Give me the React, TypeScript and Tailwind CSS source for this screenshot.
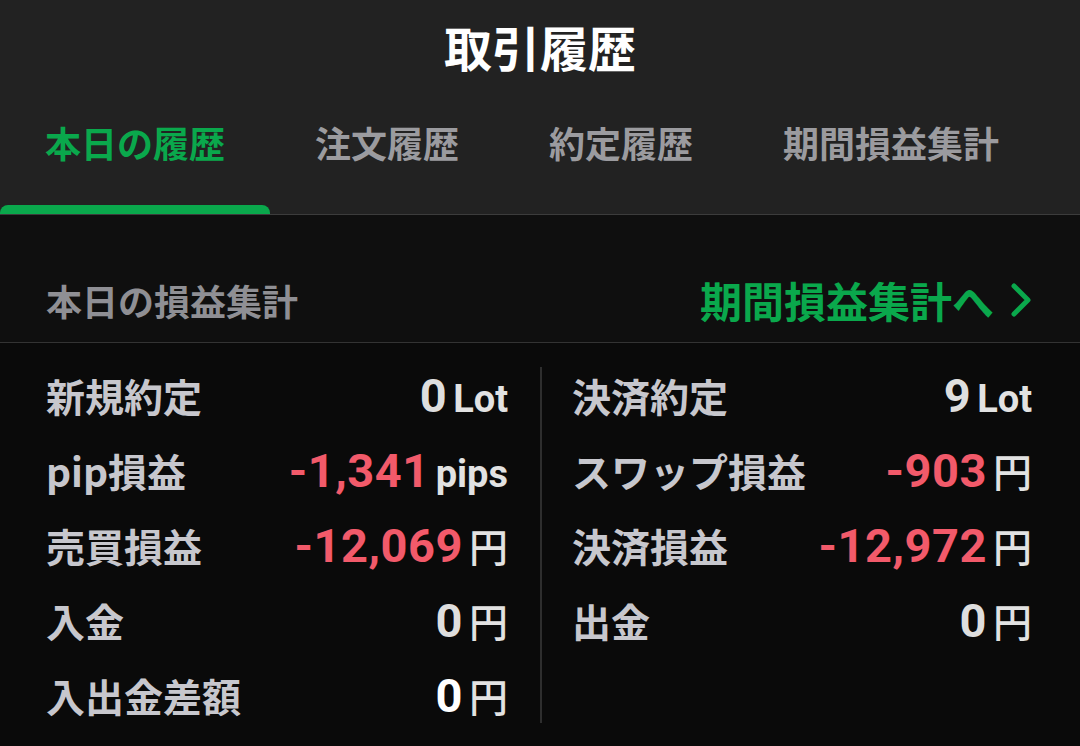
import React from 'react';

type Row = {
  label: string;
  value: string;
  unit: string;
  negative?: boolean;
  strong?: boolean;
};

const leftRows: Row[] = [
  { label: '新規約定', value: '0', unit: 'Lot' },
  { label: 'pip損益', value: '-1,341', unit: 'pips', negative: true },
  { label: '売買損益', value: '-12,069', unit: '円', negative: true },
  { label: '入金', value: '0', unit: '円' },
  { label: '入出金差額', value: '0', unit: '円', strong: true },
];

const rightRows: Row[] = [
  { label: '決済約定', value: '9', unit: 'Lot' },
  { label: 'スワップ損益', value: '-903', unit: '円', negative: true },
  { label: '決済損益', value: '-12,972', unit: '円', negative: true },
  { label: '出金', value: '0', unit: '円' },
];

const tabs = ['本日の履歴', '注文履歴', '約定履歴', '期間損益集計'];

const SummaryRow: React.FC<{ row: Row }> = ({ row }) => (
  <div className="flex h-[75px] items-center justify-between">
    <span className="text-[39px] font-bold leading-[1.2] text-[#c7c7cd]">{row.label}</span>
    <span className="flex items-baseline gap-[6px]">
      <span
        className={`font-['Roboto'] text-[47px] font-bold leading-none tracking-[0.5px] ${
          row.negative ? 'text-[#f25a6a]' : row.strong ? 'text-white' : 'text-[#dedede]'
        }`}
      >
        {row.value}
      </span>
      {row.unit === '円' ? (
        <span className="text-[39px] font-medium leading-none text-[#e2e2e2]">円</span>
      ) : (
        <span className="font-['Roboto'] text-[38px] font-bold leading-none text-[#e2e2e2]">{row.unit}</span>
      )}
    </span>
  </div>
);

export default function App() {
  return (
    <div className="flex h-[746px] w-[1080px] flex-col overflow-hidden bg-[#0a0a0a] font-['Noto_Sans_CJK_JP',sans-serif]">
      <header className="flex flex-col border-b border-[#3c3c3c] bg-[#222222]">
        <div className="flex h-[94px] items-center justify-center">
          <h1 className="text-[48px] font-bold leading-[1.2] text-white">取引履歴</h1>
        </div>
        <nav className="flex h-[120px]">
          {tabs.map((t, i) => (
            <div key={t} className="flex flex-col">
              <span
                className={`px-[45px] pt-[27px] text-[36px] font-bold leading-[1.2] ${
                  i === 0 ? 'text-[#0aa84c]' : 'text-[#9b9b9f]'
                }`}
              >
                {t}
              </span>
              <div className="flex-1" />
              <div className={`h-[9px] rounded-t-[8px] ${i === 0 ? 'bg-[#0aa84c]' : ''}`} />
            </div>
          ))}
        </nav>
      </header>

      <section className="flex h-[128px] items-center justify-between border-b border-[#333333] bg-[#0f0f0f] pl-[46px] pr-[48px] pt-[44px]">
        <span className="text-[36px] font-bold leading-[1.2] text-[#8f8f94]">本日の損益集計</span>
        <span className="flex items-center gap-[16px] text-[42px] font-bold leading-[1.2] text-[#0aa84c]">
          期間損益集計へ
          <svg width="22" height="34" viewBox="0 0 22 34" fill="none">
            <path d="M4 3 L18 17 L4 31" stroke="currentColor" strokeWidth="5" strokeLinecap="round" strokeLinejoin="round" />
          </svg>
        </span>
      </section>

      <div className="flex pt-[15px]">
        <div className="flex w-[540px] flex-col pl-[46px] pr-[32px]">
          {leftRows.map((r) => (
            <SummaryRow key={r.label} row={r} />
          ))}
        </div>
        <div className="mb-[10px] mt-[9px] w-[2px] bg-[#2e2e2e]" />
        <div className="flex flex-1 flex-col pl-[30px] pr-[48px]">
          {rightRows.map((r) => (
            <SummaryRow key={r.label} row={r} />
          ))}
        </div>
      </div>
    </div>
  );
}
